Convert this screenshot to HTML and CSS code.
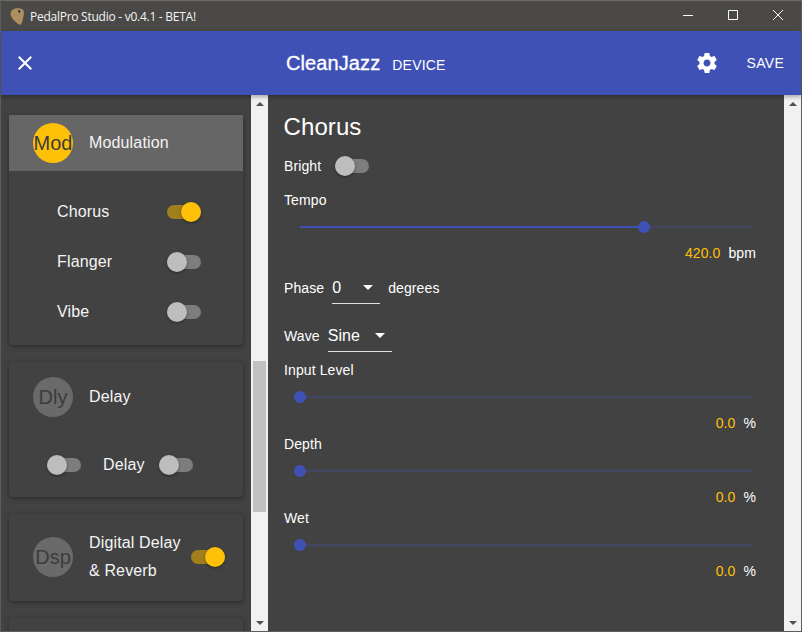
FILE: index.html
```html
<!DOCTYPE html>
<html lang="en">
<head>
    <meta charset="UTF-8">
    <meta name="viewport" content="width=device-width, initial-scale=1.0">
    <title>PedalPro Studio</title>
    <link rel="stylesheet" href="styles.css">
</head>
<body>
    <div class="window">
        <div class="titlebar">
            <svg class="app-icon" width="14" height="17" viewBox="0 0 14 17"><path d="M3 1.500C5.500 0 9.500-.2 12 1c1.800 1 2.200 3 1.800 5.500-.6 3.500-1.300 7-2.300 9-.5 1.300-2 1.500-3 .7C5.500 14 2 11 .8 7.500.2 5 1 2.800 3 1.500z" fill="#ae8f62"/><path d="M8 2.200l2.300.3-.3 2.500-1.400-.7z" fill="#1c1c1c"/></svg>
            <span class="app-title">PedalPro Studio - v0.4.1 - BETA!</span>
            <div class="win-buttons">
                <svg width="10" height="10" viewBox="0 0 10 10"><path d="M0 5.500h10" stroke="#fff" fill="none"/></svg>
                <svg width="10" height="10" viewBox="0 0 10 10"><path d="M.5.500h9v9h-9z" stroke="#fff" fill="none"/></svg>
                <svg width="10" height="10" viewBox="0 0 10 10"><path d="M0 0l10 10M10 0L0 10" stroke="#fff" fill="none"/></svg>
            </div>
        </div>

        <header class="appbar">
            <svg class="close-icon" width="14" height="14" viewBox="5 5 14 14"><path d="M19 6.410 17.590 5 12 10.590 6.410 5 5 6.410 10.590 12 5 17.590 6.410 19 12 13.410 17.590 19 19 17.590 13.410 12z" fill="#fff"/></svg>
            <span class="preset-name">CleanJazz</span>
            <span class="preset-source">DEVICE</span>
            <svg class="gear-icon" width="24" height="24" viewBox="0 0 24 24"><path d="M19.430 12.980c.04-.32.07-.64.07-.98s-.03-.66-.07-.98l2.110-1.650c.19-.15.24-.42.120-.64l-2-3.460c-.12-.22-.39-.3-.61-.22l-2.490 1c-.52-.4-1.080-.73-1.690-.98l-.38-2.650C14.460 2.180 14.250 2 14 2h-4c-.25 0-.46.18-.49.42l-.38 2.650c-.61.25-1.170.59-1.690.98l-2.490-1c-.23-.09-.49 0-.61.22l-2 3.460c-.13.22-.07.49.12.64l2.110 1.650c-.04.32-.07.65-.07.98s.03.66.07.98l-2.110 1.650c-.19.15-.24.42-.12.64l2 3.460c.12.22.39.3.61.22l2.490-1c.52.4 1.080.73 1.690.98l.38 2.650c.03.24.24.42.49.42h4c.25 0 .46-.18.49-.42l.38-2.650c.61-.25 1.170-.59 1.690-.98l2.490 1c.23.09.49 0 .61-.22l2-3.460c.12-.22.07-.49-.12-.64l-2.110-1.650zM12 15.500c-1.930 0-3.500-1.570-3.500-3.500s1.570-3.500 3.500-3.500 3.500 1.570 3.500 3.500-1.570 3.500-3.500 3.500z" fill="#fff"/></svg>
            <span class="save">SAVE</span>
        </header>

        <div class="content">
            <div class="effects">
                <section class="card card-mod">
                    <div class="card-head selected">
                        <div class="avatar on">Mod</div>
                        <span class="card-label">Modulation</span>
                    </div>
                    <div class="fx-row"><span class="fx-name">Chorus</span><div class="switch on"></div></div>
                    <div class="fx-row"><span class="fx-name">Flanger</span><div class="switch"></div></div>
                    <div class="fx-row"><span class="fx-name">Vibe</span><div class="switch"></div></div>
                </section>

                <section class="card card-delay">
                    <div class="card-head">
                        <div class="avatar">Dly</div>
                        <span class="card-label">Delay</span>
                    </div>
                    <div class="delay-row">
                        <div class="switch"></div>
                        <span class="delay-name">Delay</span>
                        <div class="switch"></div>
                    </div>
                </section>

                <section class="card card-dsp">
                    <div class="avatar">Dsp</div>
                    <span class="dsp-label">Digital Delay<br>&amp; Reverb</span>
                    <div class="switch on"></div>
                </section>

                <section class="card card-next"></section>
            </div>

            <div class="scrollbar">
                <div class="arrow-up"></div>
                <div class="thumb thumb-left"></div>
                <div class="arrow-down"></div>
            </div>

            <main class="details">
                <h1>Chorus</h1>
                <div class="row bright-row"><span>Bright</span><div class="switch"></div></div>

                <div class="label tempo-label">Tempo</div>
                <div class="slider"><div class="fill" style="width: 344px"></div><div class="knob" style="left: 344px"></div></div>
                <div class="value"><span class="num">420.0</span><span class="unit">bpm</span></div>

                <div class="row phase-row">
                    <span>Phase</span>
                    <div class="select phase-select"><span>0</span><i class="caret"></i></div>
                    <span>degrees</span>
                </div>
                <div class="row wave-row">
                    <span>Wave</span>
                    <div class="select wave-select"><span>Sine</span><i class="caret"></i></div>
                </div>

                <div class="label">Input Level</div>
                <div class="slider"><div class="knob"></div></div>
                <div class="value"><span class="num">0.0</span><span class="unit">%</span></div>

                <div class="label">Depth</div>
                <div class="slider"><div class="knob"></div></div>
                <div class="value"><span class="num">0.0</span><span class="unit">%</span></div>

                <div class="label">Wet</div>
                <div class="slider"><div class="knob"></div></div>
                <div class="value"><span class="num">0.0</span><span class="unit">%</span></div>
            </main>

            <div class="scrollbar">
                <div class="arrow-up"></div>
                <div class="thumb-space"></div>
                <div class="arrow-down"></div>
            </div>
        </div>
    </div>
</body>
</html>
```

FILE: styles.css
```css
html, body {
    margin: 0;
    height: 100%;
    overflow: hidden;
}

body {
    background-color: #424242;
    color: #fff;
    font-family: "Liberation Sans", Arial, sans-serif;
    font-size: 14px;
}

.window {
    box-sizing: border-box;
    width: 802px;
    height: 632px;
    border: 1px solid #5c5c5a;
    border-top-color: #6a6a68;
    display: flex;
    flex-direction: column;
}

.titlebar {
    height: 30px;
    flex: none;
    background-color: #4a4947;
    display: flex;
    align-items: center;
    padding-left: 9px;
}

.app-icon {
    margin-right: 6px;
}

.app-title {
    font-family: "Open Sans", sans-serif;
    font-size: 12px;
    color: #f4f4f4;
    letter-spacing: -0.26px;
}

.win-buttons {
    margin-left: auto;
    margin-right: 18px;
    margin-bottom: 2px;
    display: flex;
    gap: 35px;
}

.appbar {
    height: 64px;
    flex: none;
    background-color: #3f51b5;
    display: flex;
    align-items: center;
    padding-left: 17px;
    box-shadow: 0 2px 4px rgba(0, 0, 0, 0.3);
    position: relative;
}

.preset-name {
    margin-left: 254px;
    font-size: 20px;
    -webkit-text-stroke: 0.3px #fff;
    letter-spacing: 0.1px;
}

.preset-source {
    margin-left: 12px;
    margin-top: 3px;
    font-size: 14px;
    letter-spacing: 0.2px;
}

.gear-icon {
    margin-left: 249px;
}

.save {
    margin-left: 28px;
    font-size: 14px;
    letter-spacing: 0.3px;
}

.content {
    flex: 1;
    min-height: 0;
    display: flex;
}

.effects {
    width: 250px;
    flex: none;
    overflow: hidden;
    padding: 20px 8px 0 8px;
    box-sizing: border-box;
}

.card {
    background-color: #424242;
    border-radius: 4px;
    box-shadow: 0 2px 5px rgba(0, 0, 0, 0.3), 0 0 2px rgba(0, 0, 0, 0.1);
    margin-bottom: 16px;
}

.card-mod {
    height: 230px;
}

.card-delay {
    height: 136px;
}

.card-dsp {
    height: 88px;
    display: flex;
    align-items: center;
    padding-left: 24px;
}

.card-next {
    height: 60px;
}

.card-head {
    height: 56px;
    display: flex;
    align-items: center;
    padding-left: 24px;
}

.card-head.selected {
    background-color: #666;
}

.card-delay .card-head {
    height: 72px;
}

.avatar {
    width: 40px;
    height: 40px;
    border-radius: 50%;
    background-color: #6a6a6a;
    color: #3c3c3c;
    font-size: 20px;
    line-height: 40px;
    text-align: center;
    overflow: hidden;
    flex: none;
}

.avatar.on {
    background-color: #ffc107;
}

.card-label {
    margin-left: 16px;
    font-size: 16px;
    letter-spacing: 0.15px;
    color: #f4f4f4;
}

.fx-row {
    height: 50px;
    display: flex;
    align-items: center;
    justify-content: space-between;
    padding: 0 42px 0 48px;
    font-size: 16px;
    letter-spacing: 0.15px;
    color: #f4f4f4;
}

.card-head + .fx-row {
    margin-top: 16px;
}

.delay-row {
    display: flex;
    align-items: center;
    padding-left: 38px;
    font-size: 16px;
    letter-spacing: 0.15px;
    color: #f4f4f4;
    height: 50px;
    margin-top: 7px;
}

.delay-name {
    margin: 0 14px 0 22px;
}

.dsp-label {
    margin-left: 16px;
    font-size: 16px;
    letter-spacing: 0.15px;
    line-height: 28px;
    color: #f4f4f4;
    width: 102px;
    white-space: nowrap;
}

.switch {
    width: 34px;
    height: 14px;
    border-radius: 7px;
    background-color: #7d7d7d;
    position: relative;
    flex: none;
}

.switch::after {
    content: "";
    position: absolute;
    left: 0;
    top: -3px;
    width: 20px;
    height: 20px;
    border-radius: 50%;
    background-color: #bdbdbd;
    box-shadow: 0 1px 3px rgba(0, 0, 0, 0.4);
}

.switch.on {
    background-color: #a0801c;
}

.switch.on::after {
    left: 14px;
    background-color: #ffc107;
}

.scrollbar {
    width: 17px;
    flex: none;
    background-color: #f1f1f1;
    display: flex;
    flex-direction: column;
}

.arrow-up, .arrow-down {
    height: 17px;
    flex: none;
    display: flex;
    align-items: center;
    justify-content: center;
}

.arrow-up::before {
    content: "";
    border: 4px solid transparent;
    border-top: 0;
    border-bottom: 4px solid #505050;
}

.arrow-down::before {
    content: "";
    border: 4px solid transparent;
    border-bottom: 0;
    border-top: 4px solid #505050;
}

.thumb-left {
    flex: none;
    height: 151px;
    margin: 249px 2px 0 2px;
    background-color: #c1c1c1;
}

.arrow-down {
    margin-top: auto;
}

.thumb-space {
    flex: 1;
}

.details {
    flex: 1;
    padding: 0 0 0 16px;
    box-sizing: border-box;
    overflow: hidden;
    font-size: 14px;
    letter-spacing: 0.1px;
}

h1 {
    margin: 18px 0 0 -0.5px;
    font-size: 24px;
    font-weight: normal;
    line-height: 28px;
}

.row {
    display: flex;
    align-items: center;
}

.bright-row {
    height: 24px;
    margin-top: 13px;
    gap: 14px;
}

.label {
    height: 16px;
    line-height: 16px;
}

.tempo-label {
    margin-top: 14px;
}

.slider {
    height: 2px;
    margin: 18px 32px 0 16px;
    background-color: rgba(63, 81, 181, 0.3);
    position: relative;
}

.fill {
    height: 100%;
    background-color: #3f51b5;
}

.knob {
    position: absolute;
    left: 0;
    top: -5px;
    width: 12px;
    height: 12px;
    margin-left: -6px;
    border-radius: 50%;
    background-color: #3f51b5;
}

.value {
    height: 16px;
    line-height: 16px;
    margin-top: 17px;
    display: flex;
    justify-content: flex-end;
    padding-right: 28px;
}

.num {
    color: #ffc107;
}

.unit {
    margin-left: 8px;
}

.phase-row {
    height: 30px;
    margin-top: 12px;
    gap: 8px;
}

.wave-row {
    height: 30px;
    margin-top: 18px;
    gap: 8px;
    margin-bottom: 11px;
}

.select {
    height: 32px;
    box-sizing: border-box;
    border-bottom: 1px solid #e0e0e0;
    display: flex;
    align-items: center;
    font-size: 16px;
    position: relative;
}

.phase-select {
    width: 48px;
}

.wave-select {
    width: 64px;
}

.caret {
    position: absolute;
    right: 7px;
    top: 13px;
    border: 5px solid transparent;
    border-bottom: 0;
    border-top: 5px solid #fff;
}

.value + .label {
    margin-top: 5px;
}
```
